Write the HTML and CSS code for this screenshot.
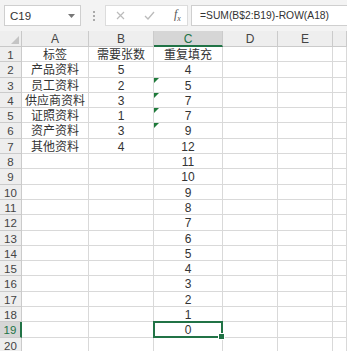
FILE: index.html
```html
<!DOCTYPE html>
<html lang="zh-CN">
<head>
  <meta charset="UTF-8" />
  <title>重复填充</title>
  <link rel="stylesheet" href="styles.css">
</head>
<body>
  <div class="toolbar">
    <div class="namebox">
      <span>C19</span>
      <svg class="caret" width="7" height="4" viewBox="0 0 7 4"><path d="M0 0h7L3.5 4z" fill="#777"/></svg>
    </div>
    <div class="dots"><i></i><i></i><i></i></div>
    <div class="fxbox">
      <svg width="9" height="9" viewBox="0 0 9 9"><path d="M1 1l7 7M8 1L1 8" stroke="#bbb" stroke-width="1.2"/></svg>
      <svg width="11" height="9" viewBox="0 0 11 9"><path d="M1 5l3 3 6-7" stroke="#bbb" stroke-width="1.3" fill="none"/></svg>
      <span class="fx">f<sub>x</sub></span>
    </div>
    <div class="formula">=SUM(B$2:B19)-ROW(A18)</div>
  </div>

  <div class="sheet" id="sheet">
    <!-- JS fills the grid -->
  </div>

  <script>
    const sheet = document.getElementById('sheet');
    const cols = ['A', 'B', 'C', 'D', 'E', ''];

    const rows = [
      ['标签', '需要张数', '重复填充'],
      ['产品资料', '5', '4'],
      ['员工资料', '2', '5'],
      ['供应商资料', '3', '7'],
      ['证照资料', '1', '7'],
      ['资产资料', '3', '9'],
      ['其他资料', '4', '12']
    ];
    [11, 10, 9, 8, 7, 6, 5, 4, 3, 2, 1, 0].forEach(n => rows.push(['', '', String(n)]));
    rows.push(['', '', '']);

    const warnRows = [3, 4, 5, 6];
    const selRow = 19;

    function cell(cls, text) {
      const d = document.createElement('div');
      d.className = cls;
      d.textContent = text || '';
      sheet.appendChild(d);
      return d;
    }

    cell('corner');
    cols.forEach(c => cell(c === 'C' ? 'colhead active' : 'colhead', c));

    rows.forEach((r, i) => {
      const num = i + 1;
      cell(num === selRow ? 'rowhead active' : 'rowhead', num);
      for (let c = 0; c < cols.length; c++) {
        let cls = 'cell';
        if (c === 2 && warnRows.includes(num)) cls += ' warn';
        if (c === 2 && num === selRow) cls += ' sel';
        cell(cls, r[c]);
      }
    });
  </script>
</body>
</html>
```

FILE: styles.css
```css
body {
  margin: 0;
  background-color: #fff;
  font-family: "Liberation Sans", "Noto Sans CJK SC", sans-serif;
  color: #333;
  overflow: hidden;
}
.toolbar {
  display: flex;
  align-items: center;
  height: 31px;
  padding-left: 4px;
  background-color: #f3f3f3;
  box-sizing: border-box;
}
.namebox {
  display: flex;
  align-items: center;
  justify-content: space-between;
  width: 77px;
  height: 21px;
  padding: 0 5px 0 5px;
  box-sizing: border-box;
  background-color: #fff;
  border: 1px solid #cfcfcf;
  font-size: 11.5px;
  color: #333;
}
.dots {
  display: flex;
  flex-direction: column;
  gap: 2px;
  margin: 0 10px 0 12px;
}
.dots i {
  width: 2px;
  height: 2px;
  background-color: #aaa;
}
.fxbox {
  display: flex;
  align-items: center;
  gap: 19px;
  width: 83px;
  height: 21px;
  padding-left: 10px;
  box-sizing: border-box;
  background-color: #fff;
  border: 1px solid #dcdcdc;
}
.fx {
  font-family: "Liberation Serif", serif;
  font-style: italic;
  font-size: 12px;
  color: #555;
}
.fx sub {
  font-size: 8px;
}
.formula {
  flex: 1;
  height: 21px;
  margin-left: 3px;
  margin-right: -2px;
  padding-left: 8px;
  box-sizing: border-box;
  background-color: #fff;
  border: 1px solid #cfcfcf;
  font-size: 10.3px;
  line-height: 19px;
  color: #333;
  white-space: nowrap;
}
.sheet {
  display: grid;
  grid-template-columns: 22px 67px 65px 69px 55px 55px 14px;
  grid-template-rows: 16px;
  grid-auto-rows: 15.3px;
  font-size: 11.5px;
}
.sheet > div {
  box-sizing: border-box;
  border-right: 1px solid #d9d9d9;
  border-bottom: 1px solid #d9d9d9;
  text-align: center;
  white-space: nowrap;
  overflow: hidden;
}
.corner {
  position: relative;
  background-color: #eeeeee;
  border-color: #c8c8c8 !important;
}
.corner::after {
  content: "";
  position: absolute;
  right: 2px;
  bottom: 2px;
  border-left: 8px solid transparent;
  border-bottom: 8px solid #c4c4c4;
}
.colhead {
  background-color: #eeeeee;
  border-color: #cbcbcb !important;
  color: #444;
  font-size: 12px;
  line-height: 16px;
}
.rowhead {
  background-color: #eeeeee;
  border-color: #cbcbcb !important;
  color: #444;
  line-height: 16px;
}
.colhead.active {
  background-color: #d6d6d6;
  border-bottom: 2px solid #217346 !important;
  color: #217346;
}
.rowhead.active {
  background-color: #d6d6d6;
  border-right: 2px solid #217346 !important;
  color: #217346;
}
.cell {
  position: relative;
  line-height: 16px;
  color: #333;
  font-size: 12px;
  overflow: visible !important;
}
.warn::before {
  content: "";
  position: absolute;
  left: 0;
  top: 0;
  border-top: 5px solid #1e7a3a;
  border-right: 5px solid transparent;
}
.sel::after {
  content: "";
  position: absolute;
  left: -1px;
  top: -1px;
  right: -1px;
  bottom: -1px;
  border: 2px solid #217346;
}
.sel::before {
  content: "";
  position: absolute;
  right: -3px;
  bottom: -3px;
  width: 5px;
  height: 5px;
  background-color: #217346;
  border: 1px solid #fff;
  z-index: 1;
}
```
